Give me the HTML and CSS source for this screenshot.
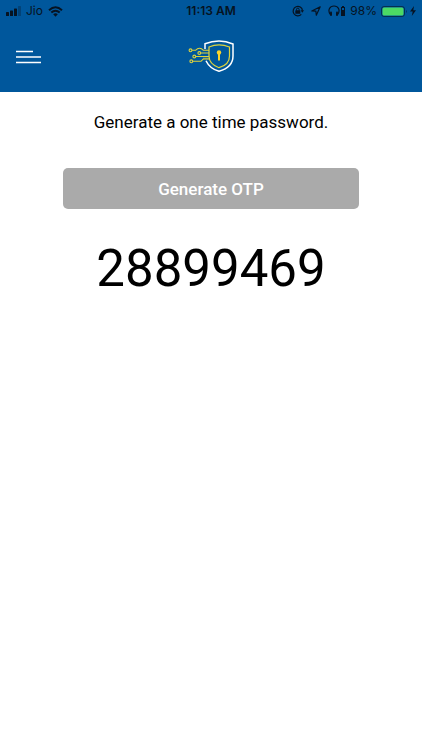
FILE: index.html
```html
<!DOCTYPE html>
<html lang="en">
<head>
<meta charset="utf-8">
<meta name="viewport" content="width=device-width, initial-scale=1">
<title>One time password</title>
<link rel="stylesheet" href="styles.css">
</head>
<body>
<header class="top">
  <div class="status">
    <div class="status-side">
      <svg class="signal" width="16" height="10" viewBox="0 0 16 10" aria-hidden="true">
        <rect x="0" y="6" width="3" height="4" rx=".6"/>
        <rect x="4" y="4.500" width="3" height="5.500" rx=".6"/>
        <rect x="8" y="2.500" width="3" height="7.500" rx=".6"/>
        <rect x="12" y="0" width="3" height="10" rx=".6" opacity=".3"/>
      </svg>
      <span>Jio</span>
      <svg class="wifi" width="15" height="11" viewBox="0 0 15 11" aria-hidden="true">
        <path d="M1 4.200Q7.500-1.800 14 4.200M3.300 6.600Q7.500 2.800 11.700 6.600" fill="none" stroke="currentColor" stroke-width="2"/>
        <path d="M5.200 8.300Q7.500 6.300 9.800 8.300L7.500 10.700Z"/>
      </svg>
    </div>
    <time class="clock">11:13 AM</time>
    <div class="status-side status-end">
      <svg width="12" height="12" viewBox="0 0 12 12" aria-hidden="true">
        <path d="M9.300 9.300A4.700 4.700 0 1 1 10.500 5.500" fill="none" stroke="currentColor" stroke-width="1.200"/>
        <path d="M8.600 5.300H12L10.300 7.800Z"/>
        <rect x="3.300" y="5.200" width="5" height="3.600" rx=".5"/>
        <path d="M4.500 5.500V4.500A1.300 1.300 0 0 1 7.100 4.500V5.500" fill="none" stroke="currentColor"/>
      </svg>
      <svg class="location" width="10" height="10" viewBox="0 0 10 10" aria-hidden="true">
        <path d="M.8 5L9.200 .8L5.300 9.200L4.900 5.200Z" fill="none" stroke="currentColor" stroke-width="1.200" stroke-linejoin="round"/>
      </svg>
      <svg class="headphones" width="18" height="12" viewBox="0 0 18 12" aria-hidden="true">
        <path d="M2.300 9.500C-.8 5 2 1 6 1S12.800 5 9.700 9.500" fill="none" stroke="currentColor" stroke-width="1.200"/>
        <rect x="2" y="6.500" width="2" height="4.500" rx="1"/>
        <rect x="8" y="6.500" width="2" height="4.500" rx="1"/>
        <path d="M14 1h2v1h1v9h-4V2h1z"/>
        <path d="M14 3h2v2h-2z" fill="#00579c"/>
      </svg>
      <span class="percent">98%</span>
      <svg class="battery" width="26" height="11" viewBox="0 0 26 11" aria-hidden="true">
        <rect x=".5" y=".5" width="23" height="10" rx="2.500" fill="none" stroke="currentColor" opacity=".6"/>
        <rect x="1.500" y="1.500" width="21" height="8" rx="1.500" fill="#4cd964"/>
        <path d="M25 4q1.500 1.500 0 3z" opacity=".6"/>
      </svg>
      <svg class="bolt" width="6" height="10" viewBox="0 0 6 10" aria-hidden="true"><path d="M4 0L0 5.600H2.700L1.800 10L6 4.300H3.300Z"/></svg>
    </div>
  </div>
  <nav class="bar">
    <button class="menu" type="button" aria-label="Menu">
      <svg width="25" height="14" viewBox="0 0 25 14" aria-hidden="true">
        <path d="M0 1.500H17M0 7H25M0 12.500H25" stroke="#fff" stroke-width="1.500"/>
      </svg>
    </button>
    <svg class="logo" width="48" height="34" viewBox="0 0 48 34" fill="none" role="img" aria-label="Security shield">
      <path d="M18 9V3.800Q25 1 32 1T46 4V16C46 24 40 29 32 31.300C26 29.500 21 25 19 20.700" stroke="#fff" stroke-width="1.500"/>
      <path d="M22 7Q27 4.800 32 4.800T42.500 7V16C42.500 22 38 26 32 27.700C26 25.500 22 21 22 16Z" stroke="#dfd43c" stroke-width="1.200"/>
      <circle cx="32" cy="12.500" r="2.200" fill="#fbd52c"/>
      <path d="M31 13h2v7.500h-2z" fill="#fbd52c"/>
      <g stroke="#dfd43c" stroke-width="1.100">
        <path d="M5 10.300H8.500Q10.500 8.300 12.500 8.300T16.500 10.300H22M13.800 13H22M8.800 16.500H22M5.800 21.300H14L16.200 19H22.500"/>
        <path d="M16 18.200H22" opacity=".5"/>
        <circle cx="3.500" cy="10.300" r="1.400"/>
        <circle cx="12.300" cy="13" r="1.400"/>
        <circle cx="7.300" cy="16.500" r="1.400"/>
        <circle cx="4.300" cy="21.300" r="1.400"/>
      </g>
    </svg>
  </nav>
</header>
<main class="content">
  <p class="lead">Generate a one time password.</p>
  <button class="generate" type="button">Generate OTP</button>
  <output class="code">28899469</output>
</main>
</body>
</html>
```
FILE: styles.css
```css
* { box-sizing: border-box; }

body {
  margin: 0;
  background: #fff;
  color: #000;
  font-family: Roboto, sans-serif;
}

.top {
  background: #00579c;
}

.status {
  display: grid;
  grid-template-columns: 1fr auto 1fr;
  align-items: center;
  height: 22px;
  padding: 0 6px;
  color: #061322;
  font: 12px/22px Inter, sans-serif;
}

.status svg { fill: currentColor; }

.status-side {
  display: flex;
  align-items: center;
  gap: 4px;
}

.status-end { justify-content: flex-end; }
.clock { font-weight: 600; }
.wifi { margin-left: 1px; }
.location { margin: 0 3px; }
.battery { margin-right: -1px; }

.bar {
  display: grid;
  grid-template-columns: 1fr auto 1fr;
  align-items: center;
  height: 70px;
  padding: 0 16px;
}

.menu {
  justify-self: start;
  display: flex;
  padding: 0;
  border: 0;
  background: none;
}

.content {
  display: flex;
  flex-direction: column;
  align-items: center;
}

.lead {
  margin: 20px 0 36px;
  font-size: 17px;
  line-height: 20px;
}

.generate {
  width: 70%;
  height: 41px;
  padding: 0;
  border: 0;
  border-radius: 5px;
  background: #aaa;
  color: #fff;
  font: 500 17px/20px Roboto, sans-serif;
}

.code {
  margin-top: 30px;
  font-size: 51px;
  line-height: 60px;
}
```
